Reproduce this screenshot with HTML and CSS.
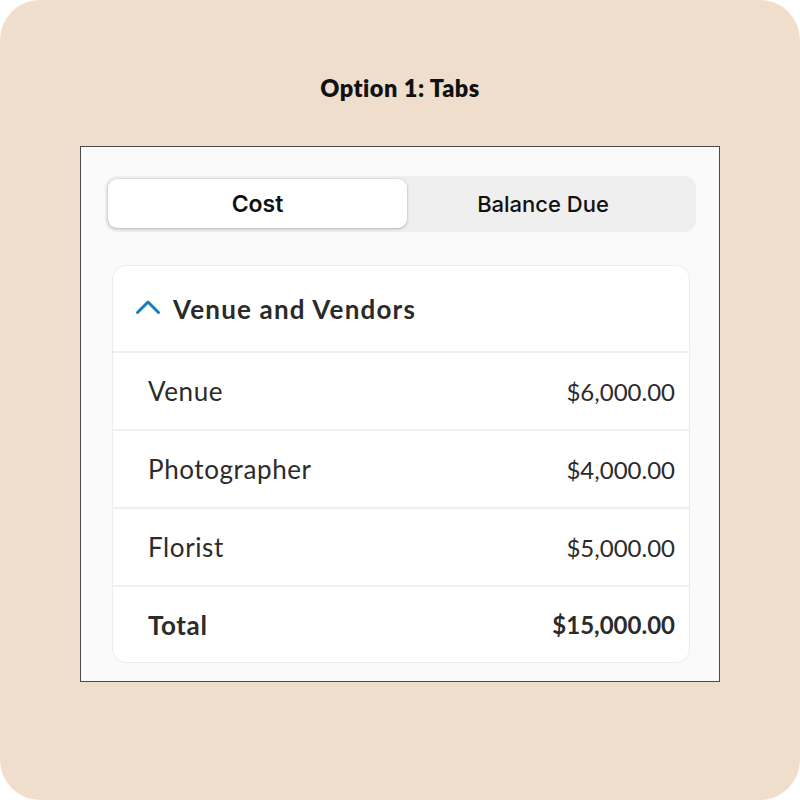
FILE: index.html
```html
<!DOCTYPE html>
<html>
<head>
<meta charset="utf-8">
<link rel="stylesheet" href="styles.css">
</head>
<body>
<div class="canvas">
  <h1 class="title">Option 1: Tabs</h1>
  <div class="frame">
    <div class="segmented">
      <div class="seg seg-active">Cost</div>
      <div class="seg seg-idle">Balance Due</div>
    </div>
    <div class="card">
      <div class="card-head">
        <svg class="chev" width="26" height="16" viewBox="0 0 26 16"><path d="M2.5 13.5 L13 3 L23.5 13.5" fill="none" stroke="#1a7dbf" stroke-width="3" stroke-linecap="round" stroke-linejoin="round"/></svg>
        <span class="head-text">Venue and Vendors</span>
      </div>
      <div class="row"><span class="label">Venue</span><span class="amount">$6,000.00</span></div>
      <div class="row"><span class="label">Photographer</span><span class="amount">$4,000.00</span></div>
      <div class="row"><span class="label">Florist</span><span class="amount">$5,000.00</span></div>
      <div class="row row-total"><span class="label">Total</span><span class="amount">$15,000.00</span></div>
    </div>
  </div>
</div>
</body>
</html>
```

FILE: styles.css
```css
html, body {
  margin: 0;
  padding: 0;
  background: #ffffff;
}
.canvas {
  width: 800px;
  height: 800px;
  background: #efdecc;
  border-radius: 40px;
  box-sizing: border-box;
  padding-top: 74px;
  display: flex;
  flex-direction: column;
  align-items: center;
}
.title {
  margin: 0;
  font-family: "Lato", "Liberation Sans", sans-serif;
  font-weight: 800;
  font-size: 23.5px;
  letter-spacing: 0.5px;
  line-height: 28px;
  color: #111;
}
.frame {
  margin-top: 44px;
  width: 640px;
  height: 536px;
  box-sizing: border-box;
  border: 1px solid #4a4a4a;
  background: #fafafa;
  padding: 29px 23px 0 24px;
  display: flex;
  flex-direction: column;
}
.segmented {
  height: 56px;
  box-sizing: border-box;
  background: #efefef;
  border-radius: 12px;
  padding: 3px 3px 4px 3px;
  display: flex;
}
.seg {
  flex: 1;
  display: flex;
  align-items: center;
  justify-content: center;
  font-family: "Inter", "Roboto", sans-serif;
  font-size: 22px;
  font-weight: 500;
  color: #111;
}
.seg-idle {
  padding-right: 14px;
}
.seg-active {
  flex: 0 0 299px;
  background: #ffffff;
  border-radius: 9px;
  box-shadow: 0 1px 3px rgba(0,0,0,0.22), 0 0 0 1px rgba(0,0,0,0.04);
  font-size: 23px;
  font-weight: 600;
}
.card {
  margin: 33px 6px 0 7px;
  background: #ffffff;
  border: 1px solid #ececec;
  border-radius: 14px;
  display: flex;
  flex-direction: column;
  font-family: "Lato", "Liberation Sans", sans-serif;
  color: #2b2b2b;
}
.card-head {
  height: 85px;
  display: flex;
  align-items: center;
  padding-left: 22px;
  gap: 12px;
  border-bottom: 2px solid #efefef;
}
.chev {
  margin-top: -4px;
}
.head-text {
  font-size: 26px;
  font-weight: 700;
  letter-spacing: 1.2px;
  color: #2a2a2a;
}
.row {
  height: 76px;
  display: flex;
  align-items: center;
  justify-content: space-between;
  padding: 0 14px 0 35px;
  border-bottom: 2px solid #efefef;
}
.label {
  font-size: 26px;
  letter-spacing: 0.6px;
}
.amount {
  font-size: 24px;
}
.row-total {
  height: 75px;
  border-bottom: none;
  font-weight: 700;
}
```
